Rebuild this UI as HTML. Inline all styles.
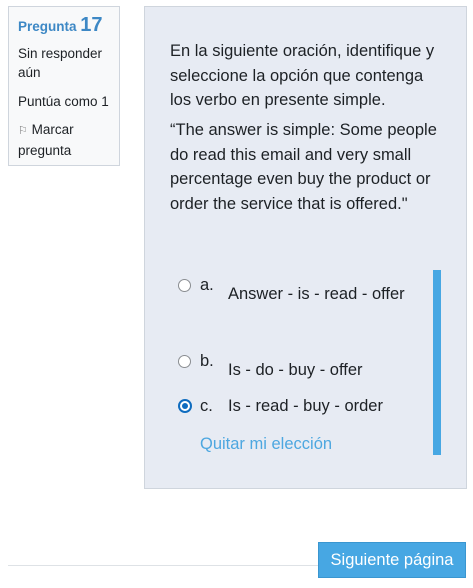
<!DOCTYPE html><html><head><style>
body{margin:0;width:473px;height:588px;background:#fff;font-family:"Liberation Sans",sans-serif;position:relative;overflow:hidden;color:#1d2125}
.a{position:absolute}
.info{left:8px;top:6px;width:112px;height:160px;border:1px solid #cfd5dd;background:#f8f9fa;box-sizing:border-box;padding:9px 0 0 9px;font-size:13.5px;line-height:19px}
.main{left:144px;top:6px;width:323px;height:483px;border:1px solid #cfd5dd;background:#e7ebf3;box-sizing:border-box}
.q{left:170px;width:290px;font-size:16.5px;line-height:24.5px;white-space:nowrap}
.r{width:11px;height:11px;border:1.5px solid #8a8d91;border-radius:50%;background:#fff}
.t{font-size:16.5px}
</style></head><body>
<div class="a info"><div style="color:#3d88c5;font-weight:bold;font-size:13.5px;margin-bottom:8px">Pregunta <span style="font-size:20px">17</span></div>
<div>Sin responder<br>aún</div><div style="margin-top:10px">Puntúa como 1</div>
<div style="margin-top:9px"><span style="color:#777;font-size:11px">⚐</span> Marcar<br>pregunta</div></div>
<div class="a main"></div>
<div class="a q" style="top:39px">En la siguiente oración, identifique y<br>seleccione la opción que contenga<br>los verbo en presente simple.</div>
<div class="a q" style="top:118px">“The answer is simple: Some people<br>do read this email and very small<br>percentage even buy the product or<br>order the service that is offered."</div>
<div class="a" style="left:433px;top:270px;width:8px;height:185px;background:#47a7e3"></div>
<div class="a r" style="left:178px;top:279px"></div><div class="a t" style="left:200px;top:276px">a.</div><div class="a t" style="left:228px;top:285px">Answer - is - read - offer</div>
<div class="a r" style="left:178px;top:355px"></div><div class="a t" style="left:200px;top:352px">b.</div><div class="a t" style="left:228px;top:361px">Is - do - buy - offer</div>
<div class="a" style="left:178px;top:399px;width:10px;height:10px;border:2px solid #0f6cbf;border-radius:50%;background:#fff"><div style="width:6px;height:6px;margin:2px;border-radius:50%;background:#0f6cbf"></div></div>
<div class="a t" style="left:200px;top:397px">c.</div><div class="a t" style="left:228px;top:397px">Is - read - buy - order</div>
<div class="a t" style="left:200px;top:435px;color:#4da7e0">Quitar mi elección</div>
<div class="a" style="left:8px;top:565px;width:310px;height:1px;background:#dee2e6"></div>
<div class="a" style="left:318px;top:542px;width:148px;height:36px;background:#47a7e3;border:1px solid #3a96d0;box-sizing:border-box;color:#fff;font-size:16.5px;line-height:34px;text-align:center">Siguiente página</div>
</body></html>
